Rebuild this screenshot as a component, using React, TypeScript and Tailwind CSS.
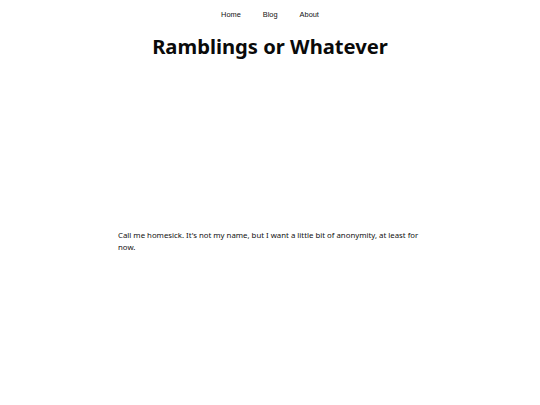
import React from 'react';

const links = ['Home', 'Blog', 'About'];

export default function App() {
  return (
    <div className="min-h-[405px] bg-white text-black">
      <nav className="flex justify-center gap-[22px] pt-[10px] font-['Liberation_Sans',Arial,sans-serif] text-[7.4px] leading-[9px] text-[#111]">
        {links.map((l) => (
          <a key={l} href="#">
            {l}
          </a>
        ))}
      </nav>

      <header className="mt-[13px] text-center">
        <h1 className="font-['Noto_Sans',sans-serif] text-[20.2px] font-bold leading-[28px] text-[#0a0a0a]">
          Ramblings or Whatever
        </h1>
      </header>

      <main className="mx-auto mt-[169px] w-[304px] font-['Noto_Sans',sans-serif] text-[7.8px] leading-[12px] text-[#111]">
        <p>
          Call me homesick. It's not my name, but I want a little bit of anonymity, at least for now.
        </p>
      </main>
    </div>
  );
}
